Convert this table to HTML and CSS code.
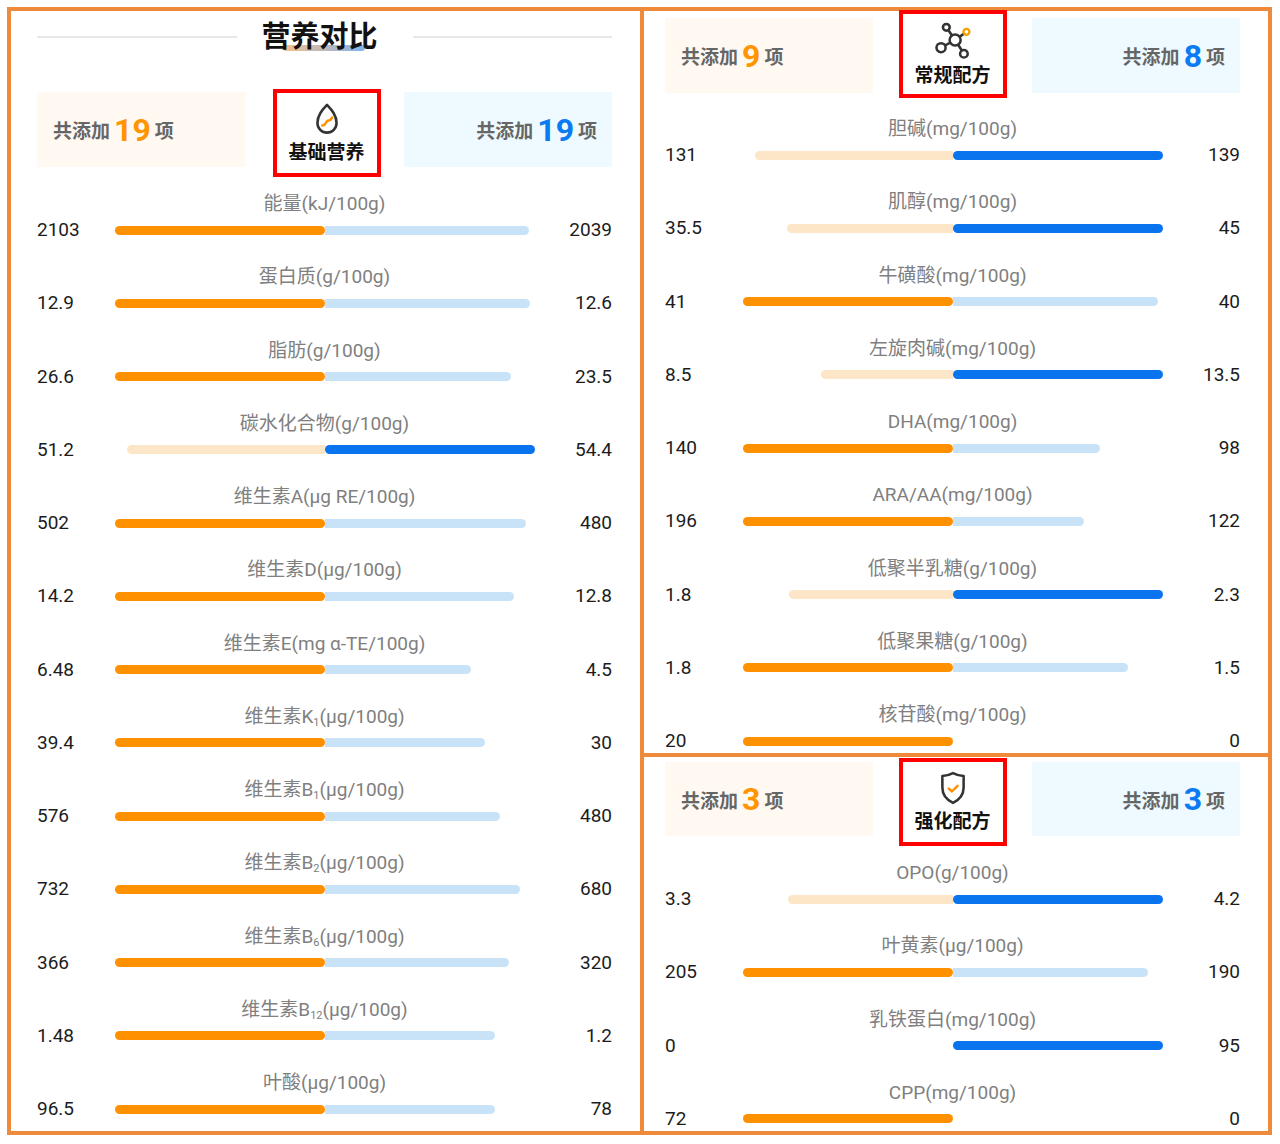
FILE: index.html
```html
<!DOCTYPE html>
<html lang="zh">
<head>
<meta charset="utf-8">
<title>营养对比</title>
<link rel="stylesheet" href="styles.css">
</head>
<body>
<div class="frame">
  <section class="panel panel-left">
    <div class="title-row">
      <div class="line"></div>
      <h1 class="title"><span>营养对比</span></h1>
      <div class="line"></div>
    </div>
    <div class="stat-row sr-left">
      <div class="stat stat-l"><span class="lbl">共添加</span><span class="num num-o">19</span><span class="lbl">项</span></div>
      <div class="tag">
        <div class="ico">
          <svg width="28" height="34" viewBox="0 0 26 32"><path d="M13 2.8 C8.5 7.5 4 12.5 4 19.8 A9 9 0 0 0 22 19.8 C22 12.5 17.5 7.5 13 2.8 Z" fill="none" stroke="#333" stroke-width="2.4" stroke-linejoin="round"/><path d="M8.6 22.2 q2.3 -0.3 3.4 -2.7 q1.1 -2.2 3.1 -2.3 q1.7 -0.2 2.7 -2.6" fill="none" stroke="#ff9000" stroke-width="2.4" stroke-linecap="round"/></svg>
        </div>
        <div class="tag-text">基础营养</div>
      </div>
      <div class="stat stat-r"><span class="lbl">共添加</span><span class="num num-b">19</span><span class="lbl">项</span></div>
    </div>
    <div class="rows rows-left">
      <div class="row"><div class="row-label">能量(kJ/100g)</div><div class="row-vals"><span>2103</span><div class="bar"><div class="half half-l"><i class="b b-o" style="width:100%"></i></div><div class="half half-r"><i class="b b-bl" style="width:96.96%"></i></div></div><span class="v-r">2039</span></div></div>
      <div class="row"><div class="row-label">蛋白质(g/100g)</div><div class="row-vals"><span>12.9</span><div class="bar"><div class="half half-l"><i class="b b-o" style="width:100%"></i></div><div class="half half-r"><i class="b b-bl" style="width:97.67%"></i></div></div><span class="v-r">12.6</span></div></div>
      <div class="row"><div class="row-label">脂肪(g/100g)</div><div class="row-vals"><span>26.6</span><div class="bar"><div class="half half-l"><i class="b b-o" style="width:100%"></i></div><div class="half half-r"><i class="b b-bl" style="width:88.35%"></i></div></div><span class="v-r">23.5</span></div></div>
      <div class="row"><div class="row-label">碳水化合物(g/100g)</div><div class="row-vals"><span>51.2</span><div class="bar"><div class="half half-l"><i class="b b-ol" style="width:94.12%"></i></div><div class="half half-r"><i class="b b-b" style="width:100%"></i></div></div><span class="v-r">54.4</span></div></div>
      <div class="row"><div class="row-label">维生素A(μg RE/100g)</div><div class="row-vals"><span>502</span><div class="bar"><div class="half half-l"><i class="b b-o" style="width:100%"></i></div><div class="half half-r"><i class="b b-bl" style="width:95.62%"></i></div></div><span class="v-r">480</span></div></div>
      <div class="row"><div class="row-label">维生素D(μg/100g)</div><div class="row-vals"><span>14.2</span><div class="bar"><div class="half half-l"><i class="b b-o" style="width:100%"></i></div><div class="half half-r"><i class="b b-bl" style="width:90.14%"></i></div></div><span class="v-r">12.8</span></div></div>
      <div class="row"><div class="row-label">维生素E(mg α-TE/100g)</div><div class="row-vals"><span>6.48</span><div class="bar"><div class="half half-l"><i class="b b-o" style="width:100%"></i></div><div class="half half-r"><i class="b b-bl" style="width:69.44%"></i></div></div><span class="v-r">4.5</span></div></div>
      <div class="row"><div class="row-label">维生素K<span class="sub">1</span>(μg/100g)</div><div class="row-vals"><span>39.4</span><div class="bar"><div class="half half-l"><i class="b b-o" style="width:100%"></i></div><div class="half half-r"><i class="b b-bl" style="width:76.14%"></i></div></div><span class="v-r">30</span></div></div>
      <div class="row"><div class="row-label">维生素B<span class="sub">1</span>(μg/100g)</div><div class="row-vals"><span>576</span><div class="bar"><div class="half half-l"><i class="b b-o" style="width:100%"></i></div><div class="half half-r"><i class="b b-bl" style="width:83.33%"></i></div></div><span class="v-r">480</span></div></div>
      <div class="row"><div class="row-label">维生素B<span class="sub">2</span>(μg/100g)</div><div class="row-vals"><span>732</span><div class="bar"><div class="half half-l"><i class="b b-o" style="width:100%"></i></div><div class="half half-r"><i class="b b-bl" style="width:92.9%"></i></div></div><span class="v-r">680</span></div></div>
      <div class="row"><div class="row-label">维生素B<span class="sub">6</span>(μg/100g)</div><div class="row-vals"><span>366</span><div class="bar"><div class="half half-l"><i class="b b-o" style="width:100%"></i></div><div class="half half-r"><i class="b b-bl" style="width:87.43%"></i></div></div><span class="v-r">320</span></div></div>
      <div class="row"><div class="row-label">维生素B<span class="sub">12</span>(μg/100g)</div><div class="row-vals"><span>1.48</span><div class="bar"><div class="half half-l"><i class="b b-o" style="width:100%"></i></div><div class="half half-r"><i class="b b-bl" style="width:81.08%"></i></div></div><span class="v-r">1.2</span></div></div>
      <div class="row"><div class="row-label">叶酸(μg/100g)</div><div class="row-vals"><span>96.5</span><div class="bar"><div class="half half-l"><i class="b b-o" style="width:100%"></i></div><div class="half half-r"><i class="b b-bl" style="width:80.83%"></i></div></div><span class="v-r">78</span></div></div>
    </div>
  </section>

  <div class="right-col">
    <section class="panel panel-rt">
      <div class="stat-row sr-rt">
        <div class="stat stat-l"><span class="lbl">共添加</span><span class="num num-o">9</span><span class="lbl">项</span></div>
        <div class="tag">
          <div class="ico">
            <svg width="36" height="36" viewBox="0 0 34 34">
              <g stroke="#333" stroke-width="2.4" fill="none">
                <line x1="10.7" y1="5" x2="19" y2="17"/>
                <line x1="19" y1="17" x2="5.7" y2="24.3"/>
                <line x1="19" y1="17" x2="27.3" y2="30"/>
                <line x1="19" y1="17" x2="29.7" y2="9.3"/>
              </g>
              <g stroke="#333" stroke-width="2.4" fill="#fff">
                <circle cx="10.7" cy="5" r="3.2"/>
                <circle cx="19" cy="17" r="5.2"/>
                <circle cx="5.7" cy="24.3" r="4.3"/>
                <circle cx="27.3" cy="30" r="3.6"/>
              </g>
              <circle cx="29.7" cy="9.3" r="2.8" stroke="#f5a000" stroke-width="2.2" fill="#fff"/>
            </svg>
          </div>
          <div class="tag-text">常规配方</div>
        </div>
        <div class="stat stat-r"><span class="lbl">共添加</span><span class="num num-b">8</span><span class="lbl">项</span></div>
      </div>
      <div class="rows rows-rt">
        <div class="row"><div class="row-label">胆碱(mg/100g)</div><div class="row-vals"><span>131</span><div class="bar"><div class="half half-l"><i class="b b-ol" style="width:94.24%"></i></div><div class="half half-r"><i class="b b-b" style="width:100%"></i></div></div><span class="v-r">139</span></div></div>
        <div class="row"><div class="row-label">肌醇(mg/100g)</div><div class="row-vals"><span>35.5</span><div class="bar"><div class="half half-l"><i class="b b-ol" style="width:78.89%"></i></div><div class="half half-r"><i class="b b-b" style="width:100%"></i></div></div><span class="v-r">45</span></div></div>
        <div class="row"><div class="row-label">牛磺酸(mg/100g)</div><div class="row-vals"><span>41</span><div class="bar"><div class="half half-l"><i class="b b-o" style="width:100%"></i></div><div class="half half-r"><i class="b b-bl" style="width:97.56%"></i></div></div><span class="v-r">40</span></div></div>
        <div class="row"><div class="row-label">左旋肉碱(mg/100g)</div><div class="row-vals"><span>8.5</span><div class="bar"><div class="half half-l"><i class="b b-ol" style="width:62.96%"></i></div><div class="half half-r"><i class="b b-b" style="width:100%"></i></div></div><span class="v-r">13.5</span></div></div>
        <div class="row"><div class="row-label">DHA(mg/100g)</div><div class="row-vals"><span>140</span><div class="bar"><div class="half half-l"><i class="b b-o" style="width:100%"></i></div><div class="half half-r"><i class="b b-bl" style="width:70%"></i></div></div><span class="v-r">98</span></div></div>
        <div class="row"><div class="row-label">ARA/AA(mg/100g)</div><div class="row-vals"><span>196</span><div class="bar"><div class="half half-l"><i class="b b-o" style="width:100%"></i></div><div class="half half-r"><i class="b b-bl" style="width:62.24%"></i></div></div><span class="v-r">122</span></div></div>
        <div class="row"><div class="row-label">低聚半乳糖(g/100g)</div><div class="row-vals"><span>1.8</span><div class="bar"><div class="half half-l"><i class="b b-ol" style="width:78.26%"></i></div><div class="half half-r"><i class="b b-b" style="width:100%"></i></div></div><span class="v-r">2.3</span></div></div>
        <div class="row"><div class="row-label">低聚果糖(g/100g)</div><div class="row-vals"><span>1.8</span><div class="bar"><div class="half half-l"><i class="b b-o" style="width:100%"></i></div><div class="half half-r"><i class="b b-bl" style="width:83.33%"></i></div></div><span class="v-r">1.5</span></div></div>
        <div class="row"><div class="row-label">核苷酸(mg/100g)</div><div class="row-vals"><span>20</span><div class="bar"><div class="half half-l"><i class="b b-o" style="width:100%"></i></div><div class="half half-r"></div></div><span class="v-r">0</span></div></div>
      </div>
    </section>

    <section class="panel panel-rb">
      <div class="stat-row sr-rb">
        <div class="stat stat-l"><span class="lbl">共添加</span><span class="num num-o">3</span><span class="lbl">项</span></div>
        <div class="tag">
          <div class="ico">
            <svg width="28" height="34" viewBox="0 0 26 32"><path d="M13 2 C16.5 3.8 19.5 4.6 23 4.8 V15.5 C23 22.5 18.5 27.3 13 30 C7.5 27.3 3 22.5 3 15.5 V4.8 C6.5 4.6 9.5 3.8 13 2 Z" fill="none" stroke="#333" stroke-width="2.4" stroke-linejoin="round"/><path d="M9 16.5 L12 19.3 L17.3 14" fill="none" stroke="#ff9000" stroke-width="2.3" stroke-linecap="round" stroke-linejoin="round"/></svg>
          </div>
          <div class="tag-text">强化配方</div>
        </div>
        <div class="stat stat-r"><span class="lbl">共添加</span><span class="num num-b">3</span><span class="lbl">项</span></div>
      </div>
      <div class="rows rows-rb">
        <div class="row"><div class="row-label">OPO(g/100g)</div><div class="row-vals"><span>3.3</span><div class="bar"><div class="half half-l"><i class="b b-ol" style="width:78.57%"></i></div><div class="half half-r"><i class="b b-b" style="width:100%"></i></div></div><span class="v-r">4.2</span></div></div>
        <div class="row"><div class="row-label">叶黄素(μg/100g)</div><div class="row-vals"><span>205</span><div class="bar"><div class="half half-l"><i class="b b-o" style="width:100%"></i></div><div class="half half-r"><i class="b b-bl" style="width:92.68%"></i></div></div><span class="v-r">190</span></div></div>
        <div class="row"><div class="row-label">乳铁蛋白(mg/100g)</div><div class="row-vals"><span>0</span><div class="bar"><div class="half half-l"></div><div class="half half-r"><i class="b b-b" style="width:100%"></i></div></div><span class="v-r">95</span></div></div>
        <div class="row"><div class="row-label">CPP(mg/100g)</div><div class="row-vals"><span>72</span><div class="bar"><div class="half half-l"><i class="b b-o" style="width:100%"></i></div><div class="half half-r"></div></div><span class="v-r">0</span></div></div>
      </div>
    </section>
  </div>
</div>
</body>
</html>
```

FILE: styles.css
```css
* { box-sizing: border-box; }

body {
  margin: 0;
  background: #ffffff;
  font-family: Roboto, "Noto Sans CJK SC", sans-serif;
  color: #222;
}

.frame {
  display: flex;
  margin: 7px 0 0 7px;
  width: 1265px;
}

.panel {
  border: 4px solid #ef8a3b;
  background: #fff;
}

.panel-left {
  width: 637px;
  height: 1128px;
  padding: 0 28px 0 26px;
}

.right-col {
  display: flex;
  flex-direction: column;
  width: 628px;
}

.panel-rt {
  height: 750px;
  border-left: none;
  padding: 0 28px 0 21px;
}

.panel-rb {
  height: 378px;
  border-left: none;
  border-top: none;
  padding: 0 28px 0 21px;
}

/* title */
.title-row {
  display: flex;
  align-items: center;
  height: 52px;
}

.line {
  flex: 1;
  height: 2px;
  background: #e8e8e8;
}

.title {
  position: relative;
  isolation: isolate;
  margin: 0;
  padding: 0 35px 6px 25px;
  font-family: "Noto Sans CJK SC", sans-serif;
  font-size: 29px;
  font-weight: 700;
  line-height: 40px;
  color: #111;
}

.title span {
  position: relative;
  z-index: 1;
}

.title::after {
  content: "";
  position: absolute;
  left: 46px;
  bottom: 9px;
  width: 82px;
  height: 6px;
  border-radius: 3px;
  background: linear-gradient(90deg, #f7c08a, #7fb3ee);
  z-index: 0;
}

/* stat header */
.stat-row {
  display: grid;
  grid-template-columns: 208px 1fr 208px;
  align-items: start;
  height: 88px;
}

.sr-left { margin-top: 26px; }
.sr-rt { margin-top: 0; }
.sr-rb { margin-top: 1px; }

.stat {
  height: 75px;
  display: flex;
  align-items: center;
  gap: 4px;
  padding: 0 15px 0 16px;
}

.sr-left .stat { margin-top: 3px; }
.sr-rt .stat { margin-top: 7px; }
.sr-rb .stat { margin-top: 4px; height: 74px; }

.stat-l { background: #fff9f2; }
.stat-r { background: #eefaff; justify-content: flex-end; }

.lbl {
  font-family: "Noto Sans CJK SC", sans-serif;
  font-size: 19px;
  font-weight: 700;
  color: #666;
}

.num {
  font-family: Roboto, sans-serif;
  font-size: 32px;
  font-weight: 700;
  line-height: 1;
}

.num-o { color: #ff9500; }
.num-b { color: #0a7bf2; }

.tag {
  justify-self: center;
  width: 108px;
  height: 88px;
  border: 4px solid #ff0000;
  padding-top: 9px;
  display: flex;
  flex-direction: column;
  align-items: center;
  gap: 5px;
  background: #fff;
}

.sr-left .tag { margin-left: 4px; }
.sr-rt .tag { margin-top: -1px; }
.sr-rt .tag-text { margin-top: 2px; }

.ico {
  height: 33px;
  display: flex;
  align-items: center;
  justify-content: center;
}

.ico svg { display: block; overflow: visible; }

.tag-text {
  font-family: "Noto Sans CJK SC", sans-serif;
  font-size: 19px;
  font-weight: 700;
  line-height: 22px;
  color: #111;
}

/* rows */
.rows-left { margin-top: 14px; }
.rows-rt { margin-top: 17px; }
.rows-rb { margin-top: 14px; }

.row {
  height: 73.25px;
}

.row-label {
  height: 26px;
  line-height: 26px;
  text-align: center;
  font-size: 19px;
  color: #808080;
  white-space: nowrap;
}

.sub {
  font-size: 11px;
  vertical-align: -3px;
  line-height: 0;
}

.row-vals {
  display: grid;
  grid-template-columns: 78px 420px 77px;
  align-items: center;
  height: 26px;
  font-size: 19px;
  color: #1c1c1c;
  line-height: 26px;
}

.v-r { text-align: right; }

.bar {
  display: flex;
  height: 9px;
}

.half {
  width: 210px;
  height: 9px;
  display: flex;
}

.half-l { justify-content: flex-end; }
.half-r { justify-content: flex-start; }

.b {
  display: block;
  height: 9px;
}

.half-l .b { border-radius: 5px 0 0 5px; }
.half-r .b { border-radius: 0 5px 5px 0; }
.half .b-o, .half .b-b { border-radius: 5px; }

.b-o { background: #ff9000; }
.b-ol { background: #fde6c8; }
.b-b { background: #0a74ef; }
.b-bl { background: #c8e3f8; }
```
